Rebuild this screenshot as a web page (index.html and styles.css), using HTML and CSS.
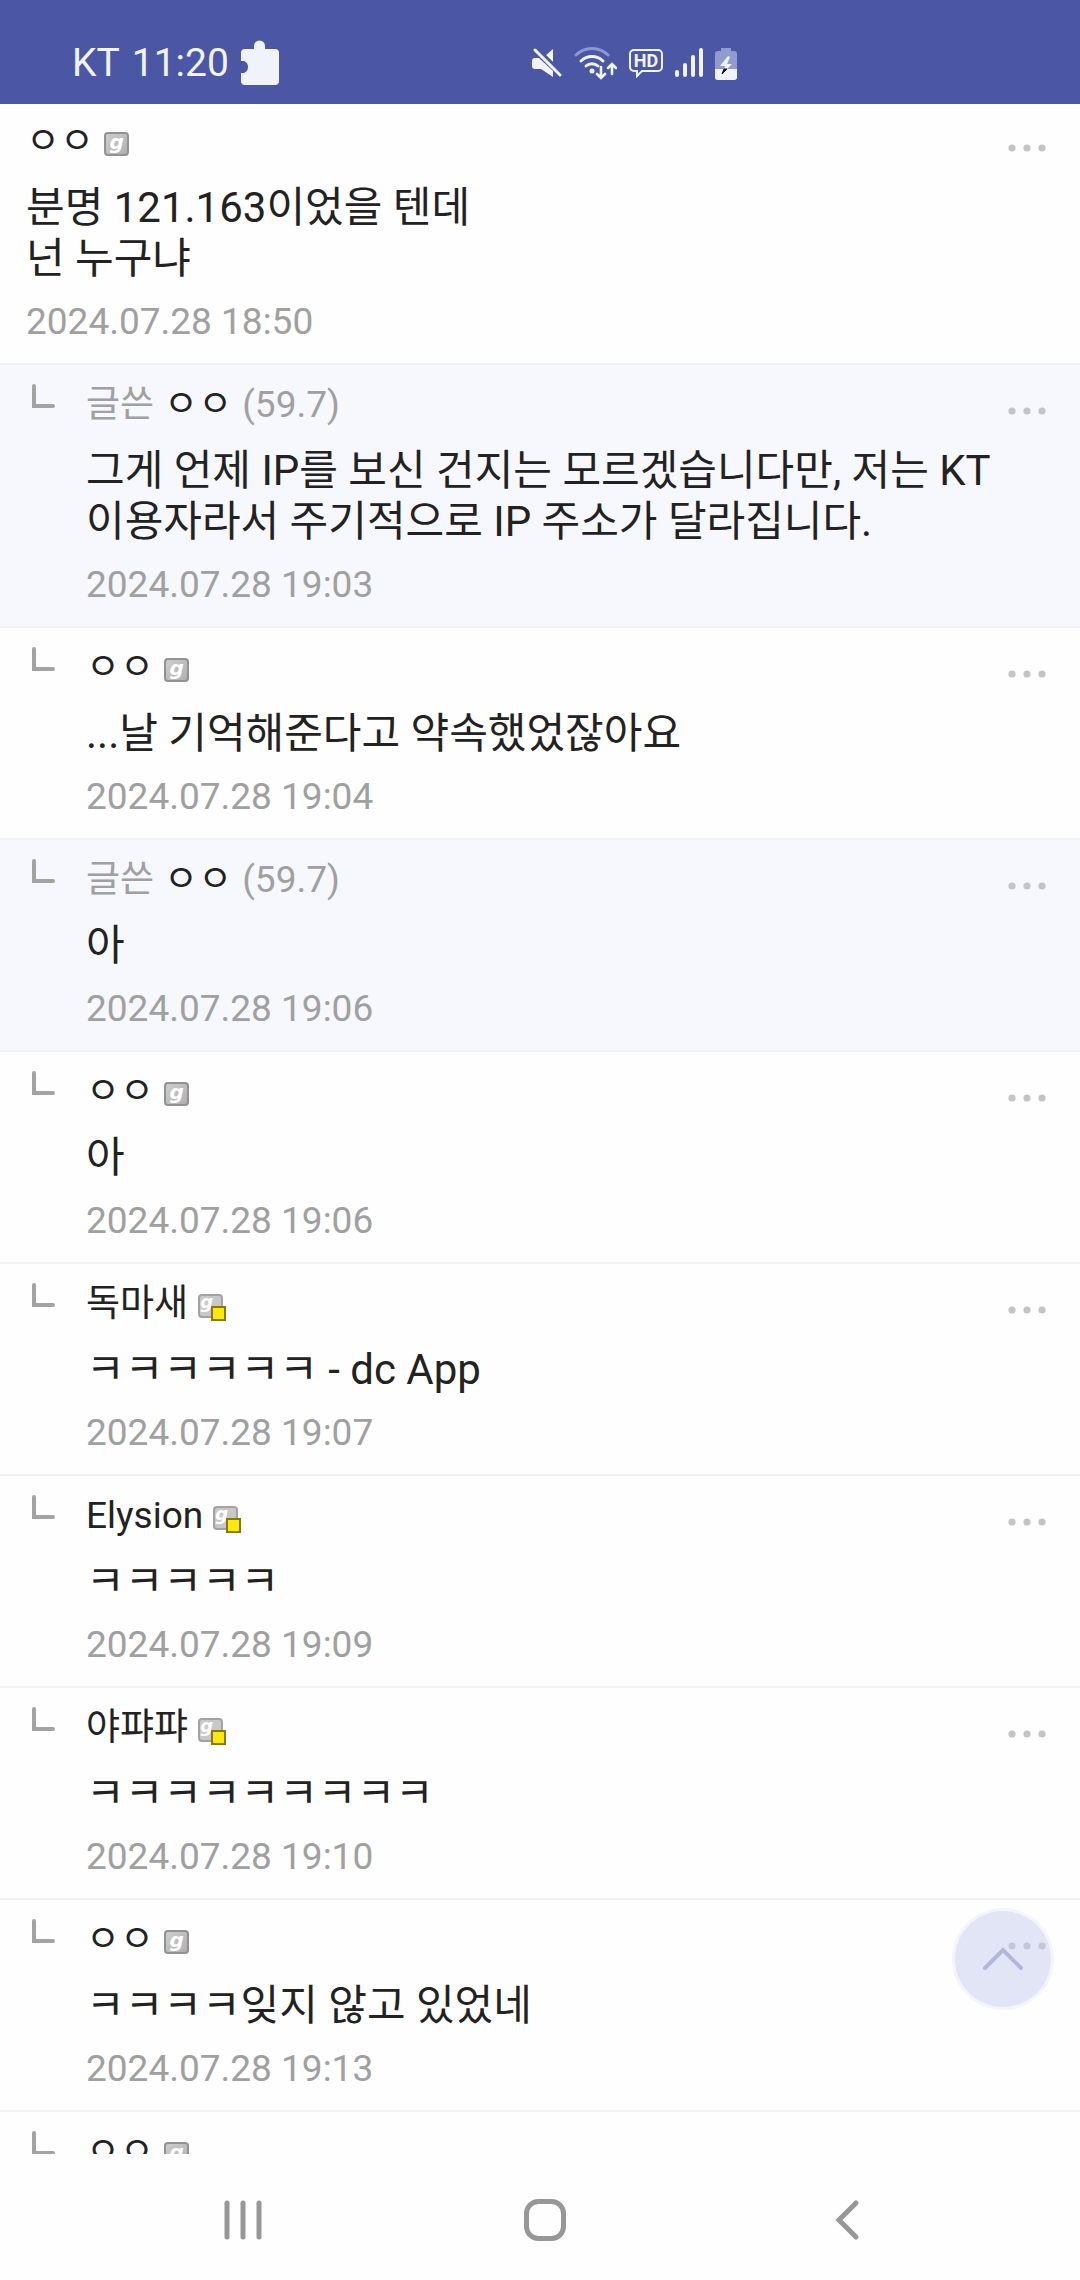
FILE: index.html
```html
<!DOCTYPE html>
<html lang="ko">
<head>
<meta charset="utf-8">
<meta name="viewport" content="width=device-width, initial-scale=1">
<title>댓글</title>
<link rel="stylesheet" href="styles.css">
</head>
<body>
<svg class="sprite" aria-hidden="true">
  <symbol id="dots" viewBox="0 0 40 10">
    <circle cx="4" cy="5" r="3.6"/><circle cx="19" cy="5" r="3.6"/><circle cx="34" cy="5" r="3.6"/>
  </symbol>
  <symbol id="reply" viewBox="0 0 24 25">
    <path d="M2 2V22H21" fill="none" stroke="#a3a3a3" stroke-width="4" stroke-linecap="round"/>
  </symbol>
</svg>
<div class="screen">
  <header class="status">
    <div class="status-left">
      <span>KT</span><span>11:20</span>
      <svg width="38" height="46" viewBox="0 0 38 46" fill="#f1f3fb"><path d="M4 9H13V6a5.500 5.500 0 0 1 11 0V9H34a4 4 0 0 1 4 4V41a4 4 0 0 1-4 4H4a4 4 0 0 1-4-4V33h3a6.500 6.500 0 0 0 0-12H0V13a4 4 0 0 1 4-4z"/></svg>
    </div>
    <div class="status-icons">
      <svg width="30" height="30" viewBox="0 0 30 30"><path d="M12 9 21 1V18z" fill="#f1f3fb"/><path d="M0 13a3 3 0 0 1 3-3H7L21 23V29L9 21H3a3 3 0 0 1-3-3z" fill="#f1f3fb"/><path d="M6 1 30 25" stroke="#4b57a5" stroke-width="3"/><path d="M3 2 28 27" stroke="#f1f3fb" stroke-width="3" stroke-linecap="round"/></svg>
      <svg width="43" height="34" viewBox="0 0 43 34" fill="none" stroke="#f1f3fb" stroke-width="3" stroke-linecap="round"><path d="M2 9a23 23 0 0 1 32 0" stroke="#8d97cf"/><path d="M7 15a16 16 0 0 1 22 0M12 20a9 9 0 0 1 12 0"/><circle cx="18" cy="25" r="2.500" fill="#f1f3fb" stroke="none"/><path d="M27 21V31M23 28l4 4 4-4M38 28V19M34 22l4-4 4 4" stroke-width="2.600"/></svg>
      <svg width="34" height="30" viewBox="0 0 34 30" fill="none" stroke="#f1f3fb" stroke-width="2"><path d="M5 2H29a4 4 0 0 1 4 4V19a4 4 0 0 1-4 4H13L8 28V23H5a4 4 0 0 1-4-4V6a4 4 0 0 1 4-4z"/><text x="17" y="19" class="hd" fill="#f1f3fb" stroke="none">HD</text></svg>
      <svg width="28" height="30" viewBox="0 0 28 30" stroke="#f1f3fb" stroke-width="4" stroke-linecap="round"><path d="M2 24V27M10 17V27M18 9V27M26 2V27"/></svg>
      <svg width="22" height="33" viewBox="0 0 22 33"><path d="M6 4V1H16V4H19a3 3 0 0 1 3 3V30a3 3 0 0 1-3 3H3a3 3 0 0 1-3-3V7a3 3 0 0 1 3-3z" fill="#929bd0"/><path d="M0 22H22V30a3 3 0 0 1-3 3H3a3 3 0 0 1-3-3z" fill="#f1f3fb"/><path d="M13 9 5 19H10L8 26 17 17H12L15 10z" fill="#f1f3fb"/><path d="M7 27 9 22H12z" fill="#111" stroke="#111"/></svg>
    </div>
  </header>
  <main class="comments">
    <article class="comment comment-root">
      <div class="head"><span class="name">ㅇㅇ</span><span class="badge">g</span></div>
      <p class="body">분명 121.163이었을 텐데<br>넌 누구냐</p>
      <time class="date">2024.07.28 18:50</time>
      <button class="more" aria-label="더보기"><svg><use href="#dots"/></svg></button>
    </article>
    <article class="comment own">
      <svg class="mark"><use href="#reply"/></svg>
      <div class="head"><span class="muted">글쓴</span><span class="name">ㅇㅇ</span><span class="muted">(59.7)</span></div>
      <p class="body">그게 언제 IP를 보신 건지는 모르겠습니다만, 저는 KT 이용자라서 주기적으로 IP 주소가 달라집니다.</p>
      <time class="date">2024.07.28 19:03</time>
      <button class="more" aria-label="더보기"><svg><use href="#dots"/></svg></button>
    </article>
    <article class="comment">
      <svg class="mark"><use href="#reply"/></svg>
      <div class="head"><span class="name">ㅇㅇ</span><span class="badge">g</span></div>
      <p class="body">...날 기억해준다고 약속했었잖아요</p>
      <time class="date">2024.07.28 19:04</time>
      <button class="more" aria-label="더보기"><svg><use href="#dots"/></svg></button>
    </article>
    <article class="comment own">
      <svg class="mark"><use href="#reply"/></svg>
      <div class="head"><span class="muted">글쓴</span><span class="name">ㅇㅇ</span><span class="muted">(59.7)</span></div>
      <p class="body">아</p>
      <time class="date">2024.07.28 19:06</time>
      <button class="more" aria-label="더보기"><svg><use href="#dots"/></svg></button>
    </article>
    <article class="comment">
      <svg class="mark"><use href="#reply"/></svg>
      <div class="head"><span class="name">ㅇㅇ</span><span class="badge">g</span></div>
      <p class="body">아</p>
      <time class="date">2024.07.28 19:06</time>
      <button class="more" aria-label="더보기"><svg><use href="#dots"/></svg></button>
    </article>
    <article class="comment">
      <svg class="mark"><use href="#reply"/></svg>
      <div class="head"><span class="name">독마새</span><span class="badge badge-fixed">g</span></div>
      <p class="body">ㅋㅋㅋㅋㅋㅋ - dc App</p>
      <time class="date">2024.07.28 19:07</time>
      <button class="more" aria-label="더보기"><svg><use href="#dots"/></svg></button>
    </article>
    <article class="comment">
      <svg class="mark"><use href="#reply"/></svg>
      <div class="head"><span class="name">Elysion</span><span class="badge badge-fixed">g</span></div>
      <p class="body">ㅋㅋㅋㅋㅋ</p>
      <time class="date">2024.07.28 19:09</time>
      <button class="more" aria-label="더보기"><svg><use href="#dots"/></svg></button>
    </article>
    <article class="comment">
      <svg class="mark"><use href="#reply"/></svg>
      <div class="head"><span class="name">야퍄퍄</span><span class="badge badge-fixed">g</span></div>
      <p class="body">ㅋㅋㅋㅋㅋㅋㅋㅋㅋ</p>
      <time class="date">2024.07.28 19:10</time>
      <button class="more" aria-label="더보기"><svg><use href="#dots"/></svg></button>
    </article>
    <article class="comment">
      <svg class="mark"><use href="#reply"/></svg>
      <div class="head"><span class="name">ㅇㅇ</span><span class="badge">g</span></div>
      <p class="body">ㅋㅋㅋㅋ잊지 않고 있었네</p>
      <time class="date">2024.07.28 19:13</time>
      <button class="more" aria-label="더보기"><svg><use href="#dots"/></svg></button>
    </article>
    <article class="comment">
      <svg class="mark"><use href="#reply"/></svg>
      <div class="head"><span class="name">ㅇㅇ</span><span class="badge">g</span></div>
    </article>
    <button class="to-top" aria-label="맨 위로"><svg width="42" height="24" viewBox="0 0 42 24" fill="none" stroke="#b3b6da" stroke-width="4" stroke-linecap="round"><path d="M3 21 21 3 39 21"/></svg></button>
  </main>
  <nav class="nav">
    <button aria-label="최근 앱"><svg width="38" height="42" viewBox="0 0 38 42" stroke="#979797" stroke-width="5" stroke-linecap="round"><path d="M3 4V38M19 4V38M35 4V38"/></svg></button>
    <button aria-label="홈"><svg width="42" height="42" viewBox="0 0 42 42" fill="none" stroke="#979797" stroke-width="5"><rect x="2.500" y="2.500" width="37" height="37" rx="12"/></svg></button>
    <button aria-label="뒤로"><svg width="26" height="42" viewBox="0 0 26 42" fill="none" stroke="#979797" stroke-width="5" stroke-linecap="round"><path d="M22 4 5 21 22 38"/></svg></button>
  </nav>
</div>
</body>
</html>
```
FILE: styles.css
```css
* { box-sizing: border-box; }
body {
  margin: 0;
  background: #fefefe;
  color: #222;
  font-family: Roboto, "Noto Sans CJK KR", sans-serif;
}
button {
  display: flex;
  align-items: center;
  justify-content: center;
  margin: 0;
  padding: 0;
  border: 0;
  background: none;
}
svg { display: block; flex: none; }
.sprite { position: absolute; width: 0; height: 0; }
.screen { display: flex; flex-direction: column; height: 100vh; }

.status {
  display: flex;
  flex: none;
  height: 104px;
  padding: 22px 72px 0;
  background: #4b57a5;
  color: #f1f3fb;
  font-size: 39px;
}
.status-left { display: flex; flex: 0 0 460px; gap: 12px; height: 82px; align-items: center; }
.status-icons { display: flex; gap: 12px; height: 82px; align-items: center; }
.hd { font: 700 18px Roboto, sans-serif; text-anchor: middle; }

.comments { position: relative; flex: 1; min-height: 0; overflow: hidden; }
.comment {
  display: grid;
  grid-template-columns: 1fr 40px;
  position: relative;
  padding: 14px 32px 17px 86px;
  border-bottom: 2px solid #f2f2f4;
}
.comment-root { padding: 12px 32px 17px 26px; }
.own { background: #f7f8fd; }
.mark { position: absolute; left: 32px; top: 19px; width: 24px; height: 25px; }
.head { display: flex; align-items: center; gap: 10px; height: 52px; font-size: 37px; line-height: 52px; }
.muted, .date { color: #a0a0a0; }
.badge {
  position: relative;
  width: 25px;
  height: 24px;
  margin-top: 4px;
  border: 2px solid #929292;
  border-radius: 4px;
  background: linear-gradient(135deg, #cdcdcd, #b0b0b0);
  color: #fff;
  font: italic 700 20px/16px "DejaVu Sans", sans-serif;
  text-align: center;
}
.badge-fixed { border-color: #a2a2a2; background: #c8c8c8; font-size: 18px; line-height: 12px; text-align: left; }
.badge-fixed::after {
  content: "";
  position: absolute;
  right: -5px;
  bottom: -5px;
  width: 11px;
  height: 11px;
  border: 2px solid #8d7320;
  background: #fbe90c;
}
.body { grid-column: 1 / -1; margin: 14px 0; font-size: 42px; line-height: 51px; word-break: keep-all; }
.date { grid-column: 1 / -1; font-size: 37px; line-height: 48px; }
.more { grid-area: 1 / 2; height: 64px; margin-bottom: -12px; fill: #c3c3c8; }
.more svg { width: 40px; height: 10px; }

.to-top {
  position: absolute;
  right: 29px;
  bottom: 147px;
  width: 96px;
  height: 96px;
  border-radius: 50%;
  background: rgba(198, 204, 238, 0.5);
  box-shadow: 0 0 0 3px rgba(240, 241, 250, 0.7);
}
.nav {
  display: grid;
  grid-template-columns: repeat(3, 1fr);
  flex: none;
  height: 126px;
  padding: 6px 82px 0 92px;
}
```
